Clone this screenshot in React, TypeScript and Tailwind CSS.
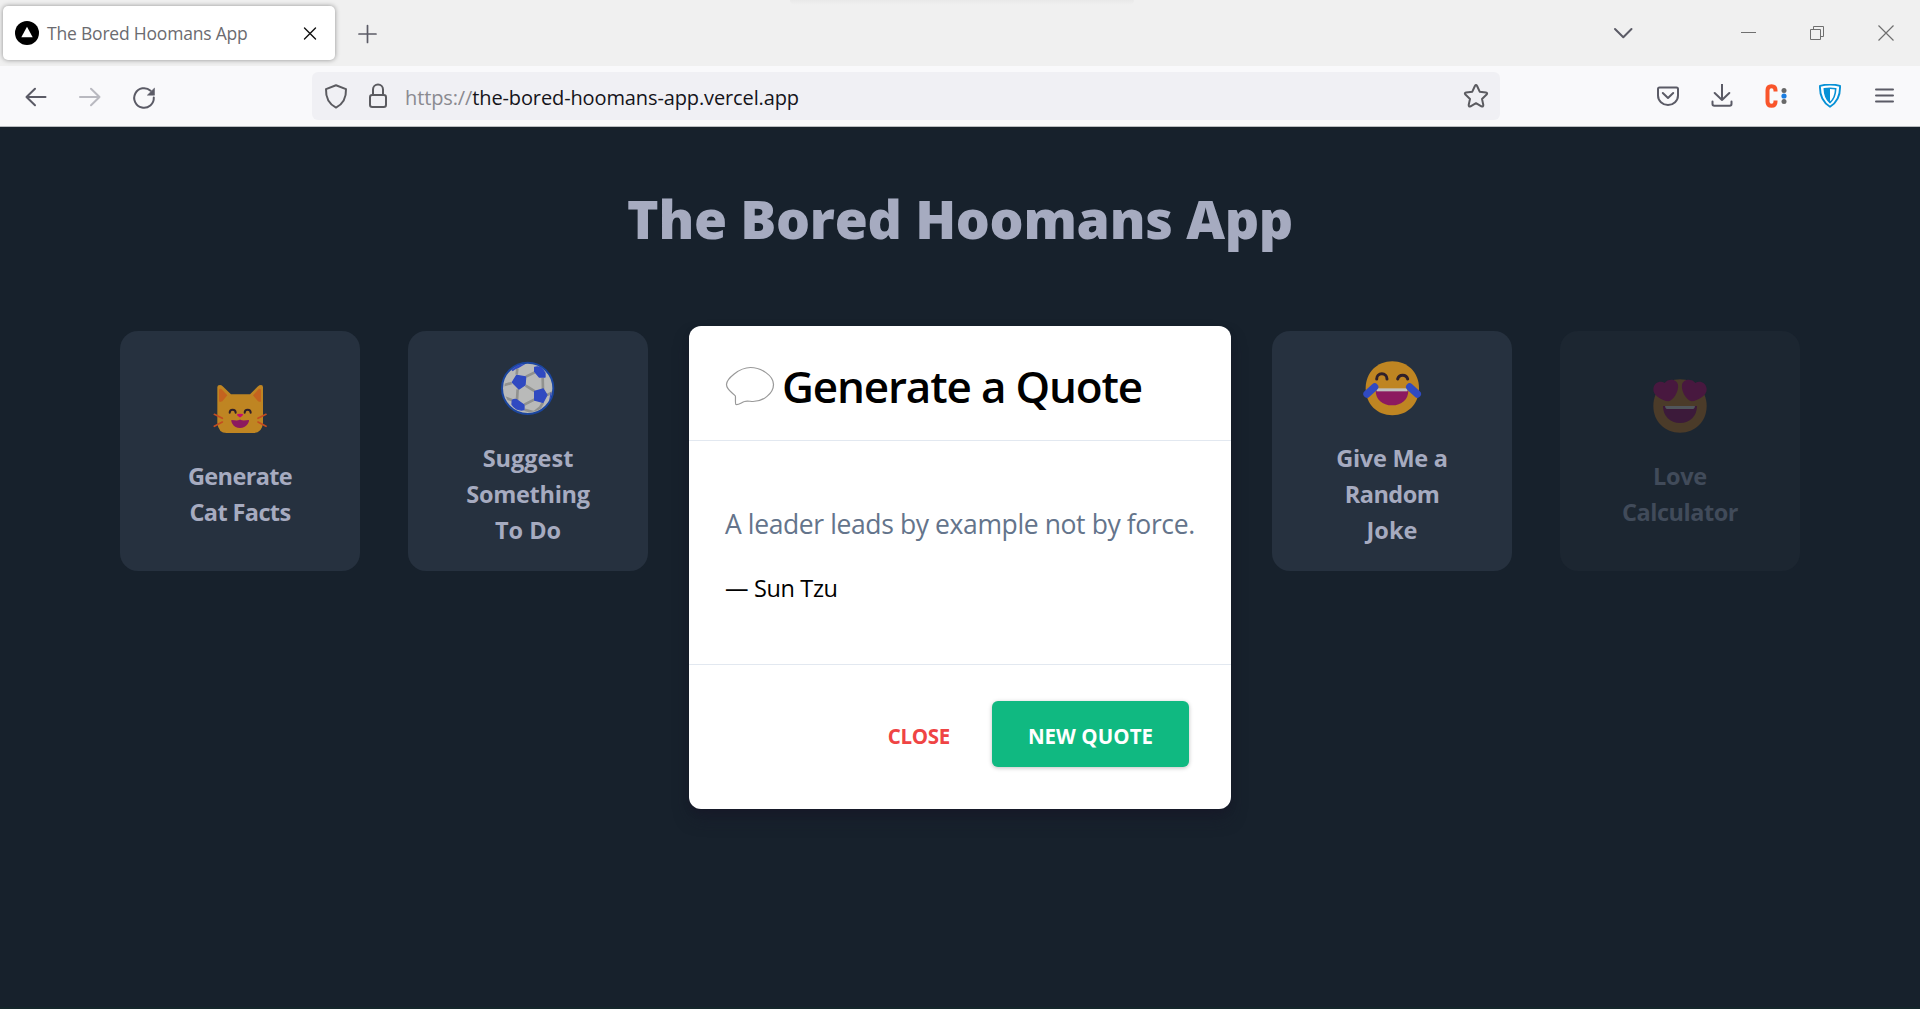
import React from "react";

const stroke = {
  fill: "none",
  stroke: "#5b5b66",
  strokeWidth: 2,
  strokeLinecap: "round" as const,
  strokeLinejoin: "round" as const,
};

function TabStrip() {
  return (
    <div className="relative flex h-[66px] w-full items-start bg-[#f0f0f0]">
      <div className="absolute left-[790px] top-0 h-[5px] w-[344px] rounded-b-full bg-gradient-to-b from-[#e9e9e9] to-[#f0f0f0]" />
      <div className="ml-[3px] mt-[6px] flex h-[54px] w-[332px] items-center rounded-[5px] bg-white shadow-[0_0_5px_rgba(0,0,0,0.4)]">
        <svg width="24" height="24" viewBox="0 0 24 24" className="ml-3 shrink-0">
          <circle cx="12" cy="12" r="12" fill="#000" />
          <path d="M12 5.8 17.7 16.2H6.3Z" fill="#fff" />
        </svg>
        <span className="ml-2 w-[243px] whitespace-nowrap text-[17.5px] leading-[26px] tracking-[-0.2px] text-[#6b6b70]">
          The Bored Hoomans App
        </span>
        <svg width="36" height="36" viewBox="0 0 36 36" className="shrink-0">
          <path d="m14.5 13 11 11m0-11-11 11" {...stroke} stroke="#111" strokeWidth="1.4" />
        </svg>
      </div>
      <svg width="24" height="24" viewBox="0 0 24 24" className="ml-5 mt-[22px]">
        <path d="M12.5 3.5v17M4 12h17" {...stroke} strokeWidth="1.7" />
      </svg>
      <div className="ml-auto flex h-[66px] items-center">
        <svg width="24" height="24" viewBox="0 0 24 24" className="mr-[102px]">
          <path d="m4 8 8.3 8.2L20.500 8" {...stroke} />
        </svg>
        <svg width="24" height="24" viewBox="0 0 24 24" className="mr-11">
          <path d="M4 11.5h15" stroke="#6f6f6f" fill="none" />
        </svg>
        <svg width="24" height="24" viewBox="0 0 24 24" className="mr-[45px]">
          <path d="M5.500 8.500h10v10h-10zM8.500 8.500v-3h10v10h-3" stroke="#6f6f6f" fill="none" />
        </svg>
        <svg width="24" height="24" viewBox="0 0 24 24" className="mr-[22px]">
          <path d="m4.500 4.500 15 15m0-15-15 15" stroke="#6f6f6f" strokeWidth="1.2" fill="none" />
        </svg>
      </div>
    </div>
  );
}

function NavBar() {
  return (
    <div className="flex h-[61px] w-full items-center border-b border-[#b9bcc0] bg-[#f9f9fb]">
      <svg width="30" height="30" viewBox="0 0 30 30" className="ml-[21px]">
        <path d="M24.500 16H5.500m8.500-8.300L5.500 16l8.500 8.300" {...stroke} />
      </svg>
      <svg width="30" height="30" viewBox="0 0 30 30" className="ml-6">
        <path d="M5 16h19.500M16 7.700l8.500 8.300-8.500 8.300" {...stroke} stroke="#b9b9c0" />
      </svg>
      <svg width="30" height="30" viewBox="0 0 30 30" className="ml-6">
        <path d="M24.800 16.500a9.800 9.800 0 1 1-3.200-6.800" {...stroke} />
        <path d="M25.500 7v7.200h-7.200z" fill="#5b5b66" stroke="#5b5b66" strokeWidth=".5" />
      </svg>
      <div className="ml-[153px] flex h-12 w-[1188px] items-center rounded-[6px] bg-[#f0f0f4]">
        <svg width="24" height="26" viewBox="0 0 24 26" className="ml-3">
          <path d="M12 2.200 2 6.100c-.3 7 2.500 14.600 10 18.500 7.500-3.900 10.300-11.500 10-18.500Z" {...stroke} stroke="#5b5b60" />
        </svg>
        <svg width="24" height="26" viewBox="0 0 24 26" className="ml-[18px]">
          <rect x="4" y="12" width="16" height="12" rx="2.200" {...stroke} stroke="#5b5b60" />
          <path d="M7 12V6.500a5 5 0 0 1 10 0V12" {...stroke} stroke="#5b5b60" />
        </svg>
        <span className="ml-[15px] whitespace-nowrap pt-[3px] text-[20px] leading-[28px] tracking-[-0.12px] text-[#8a8a90]">
          https://<span className="text-[#15141a]">the-bored-hoomans-app.vercel.app</span>
        </span>
        <svg width="26" height="26" viewBox="0 0 26 26" className="ml-auto mr-[11px]">
          <path d="M11.900 3q1.100-1.900 2.200 0l2.600 5.700 6.200.7q2.100.5.700 2.200l-4.600 4.300 1.300 6.100q.1 2.100-1.900 1.300L13 20.200l-5.400 3.100q-2 .8-1.900-1.300L7 15.900l-4.600-4.300q-1.400-1.700.7-2.200l6.200-.7Z" {...stroke} stroke="#5b5b60" />
        </svg>
      </div>
      <div className="ml-auto mr-6 flex items-center gap-[30px]">
        <svg width="24" height="24" viewBox="0 0 24 24">
          <path d="M3.500 3.500h17q1.500 0 1.500 1.500v6.500a10 9.500 0 0 1-20 0V5q0-1.500 1.500-1.500Z" {...stroke} />
          <path d="m6.800 9 5.200 5L17.200 9" {...stroke} />
        </svg>
        <svg width="24" height="24" viewBox="0 0 24 24">
          <path d="M12 0v16M4.700 9l7.300 7 7.300-7M2.500 17.500V20q0 1.800 1.800 1.800h15.400q1.800 0 1.800-1.800v-2.500" {...stroke} />
        </svg>
        <svg width="24" height="24" viewBox="0 0 24 24">
          <path d="M11.500 7.500V6.200q0-4-4-4t-4 4v11.600q0 4 4 4t4-4v-1.300" stroke="#f9552b" strokeWidth="4" fill="none" />
          <circle cx="20" cy="6.500" r="2.500" fill="#686868" />
          <circle cx="20" cy="12" r="2.600" fill="#1b7de0" />
          <circle cx="20" cy="17.500" r="2.500" fill="#686868" />
        </svg>
        <svg width="24" height="24" viewBox="0 0 24 24">
          <path d="M2 1.800Q12-.7 22 1.800C22.500 12 18.500 18.800 12 22.800 5.500 18.800 1.500 12 2 1.800Z" fill="#fff" stroke="#0791d6" strokeWidth="1.900" strokeLinejoin="round" />
          <path d="M6.300 4.800q5.700-1 11.400 0C17.500 11 15.800 15.500 12 18.500 8.200 15.500 6.500 11 6.300 4.800Z" fill="#fff" stroke="#0791d6" strokeWidth="1.600" />
          <path d="M6.300 4.800 12 4.400v14C8.200 15.500 6.500 11 6.300 4.800Z" fill="#0791d6" />
        </svg>
        <svg width="24" height="24" viewBox="0 0 24 24">
          <path d="M4 5.500h17M4 11.500h17M4 17.500h17" {...stroke} />
        </svg>
      </div>
    </div>
  );
}

function Cat() {
  return (
    <svg width="60" height="60" viewBox="0 0 180 180">
      <path d="M22 33q0-6 8-6 4 0 8 4l25 24h57l24-24q4-4 9-4 6 0 6 7v107q-3 30-28 30H50q-25 0-28-30Z" fill="#bf8522" />
      <path d="M27 42q1-5 7-3l18 19-15 18-7 2q-3-1-3-4ZM153 42q-1-5-7-3l-17 19 15 18 7 2q2-1 2-4Z" fill="#c4631f" />
      <path d="M59 110a9 9 0 0 1 18 0M104 110a9 9 0 0 1 18 0" fill="none" stroke="#30202a" strokeWidth="6" strokeLinecap="round" />
      <path d="M83 114q8-2 15 0 3 1 0 4l-5 5q-3 2-6 0l-5-5q-2-3 1-4Z" fill="#c20c70" />
      <path d="M64 132q26 3 26-2 1 5 27 2 1 5-4 12-9 12-23 12-15 0-23-13-4-6-3-11Z" fill="#8c195f" />
      <path d="m13 115 24 12m-24 24 24-13m131-23-24 12m24 24-24-13" stroke="#c34c20" strokeWidth="5" strokeLinecap="round" />
    </svg>
  );
}

function Ball() {
  return (
    <svg width="60" height="60" viewBox="0 0 180 180">
      <defs>
        <clipPath id="ball">
          <circle cx="91" cy="91" r="72" />
        </clipPath>
      </defs>
      <circle cx="89" cy="91" r="77" fill="#b9bab9" stroke="#1b469f" strokeWidth="6" />
      <g clipPath="url(#ball)">
        <path
          d="M56 50 58 32M84 56l26-13M83 83l28 17M59 94l-2 32M79 140l31-16M134 59l1 34M41 75 16 82M43 127l-24-9M80 155l28 8M147 111l18-8M135 133l-9 16-18 14"
          fill="none" stroke="#91928f" strokeWidth="8"
        />
      </g>
      <g fill="#304ac1" stroke="#304ac1" strokeWidth="4" strokeLinejoin="round">
        <path d="m56 52 27 5-2 24-18 12-20-20Z" />
        <path d="m110 100 26-7 11 18-12 22-25-7Z" />
        <path d="M110 28q8-3 16 0 9 6 15 17v12h-17l-14-16Z" />
        <path d="M43 127q6-4 13-2l22 16v14q-10 3-22-2-9-6-14-14Z" />
      </g>
      <path d="M40 36q18-20 42-18L62 30q-10 2-18 10Z" fill="#304ac1" />
      <path d="M158 103q3-2 3 4-1 12-8 22Z" fill="#304ac1" />
    </svg>
  );
}

function JoyFace() {
  return (
    <svg width="60" height="60" viewBox="0 0 180 180">
      <path d="M91 10c46 0 80 34 80 81s-34 81-80 81-80-34-80-81 34-81 80-81Z" fill="#bf8522" />
      <path d="M44 63a15.500 15.500 0 0 1 31 0M107 63a15.500 15.500 0 0 1 30 0" stroke="#30202a" strokeWidth="9" strokeLinecap="round" fill="none" />
      <path d="M41 98h98c0 26-20 44-49 44s-49-18-49-44Z" fill="#8c195f" />
      <path d="M44 91h92v9H44z" fill="#bfc0be" />
      <path d="m38 87-23 21m128-21 23 21" stroke="#304ac1" strokeWidth="22" strokeLinecap="round" />
    </svg>
  );
}

function LoveFace() {
  return (
    <svg width="60" height="60" viewBox="0 0 180 180">
      <path d="M90 10c46 0 80 34 80 80s-34 80-80 80-80-34-80-80 34-80 80-80Z" fill="#4b3b29" />
      <path d="M39 90h102c0 30-21 51-51 51S39 120 39 90Z" fill="#3c1a3a" />
      <path d="M45 90h90q-1 9-5 9H50q-4 0-5-9Z" fill="#51565b" />
      <path d="M56 76C36 74 8 58 10 38c2-19 22-26 34-17C53 7 80 7 84 26c3 20-13 45-28 50Z" fill="#48183f" />
      <path d="M124 76c20-2 48-18 46-38-2-19-22-26-34-17-9-14-36-14-40 5-3 20 13 45 28 50Z" fill="#48183f" />
    </svg>
  );
}

function Card({ icon, lines, dim }: { icon?: React.ReactNode; lines: { text: string; cls: string }[]; dim?: boolean }) {
  return (
    <div
      className={
        "flex h-60 w-60 flex-col items-center justify-center rounded-[18px] " +
        (dim ? "bg-[#1c2631] text-[#414b5a]" : "bg-[#26313f] text-[#a6abc0]")
      }
    >
      <div className="h-[85px] pt-[3px]">{icon}</div>
      {lines.map((l) => (
        <div key={l.text} className={"whitespace-nowrap text-[23.5px] font-bold leading-9 " + l.cls}>
          {l.text}
        </div>
      ))}
    </div>
  );
}

function QuoteDialog() {
  return (
    <div className="absolute left-[689px] top-[326px] flex h-[483px] w-[542px] flex-col rounded-[12px] bg-white shadow-[0_11px_17px_-3px_rgba(23,24,40,0.7),0_4px_7px_-2px_rgba(23,20,40,0.5)]">
      <div className="flex h-[115px] items-center border-b border-[#e2e8f0] pl-9 pt-[5px]">
        <svg width="52" height="48" viewBox="0 0 52 48" className="shrink-0">
          <path
            d="M25.500 5.500C36 5.500 48.500 13.500 48.500 22.500S38 39.500 28 39.500c-3 0-6-1-8.500 0-3 1-6 3.500-8.500 3-1-.5-.3-6-.6-8.500C8 31 1.500 28 1.500 22.500S14 5.500 25.500 5.500Z"
            fill="#fff" stroke="#999" strokeWidth="1.200"
          />
        </svg>
        <h2 className="ml-[5px] whitespace-nowrap text-[44px] font-semibold leading-[60px] tracking-[-1.15px] text-black">
          Generate a Quote
        </h2>
      </div>
      <div className="flex h-[224px] flex-col border-b border-[#e2e8f0] pl-9 pt-[63px]">
        <p className="whitespace-nowrap text-[26.500px] leading-10 tracking-[-0.39px] text-[#64748b]">A leader leads by example not by force.</p>
        <p className="mt-6 whitespace-nowrap text-[23.500px] leading-10 tracking-[-0.35px] text-black">— Sun Tzu</p>
      </div>
      <div className="flex items-center justify-end pr-[42px] pt-9">
        <button className="mr-[42px] whitespace-nowrap pt-[3px] text-[20.500px] font-bold leading-[30px] tracking-[-0.3px] text-[#ef4444]">CLOSE</button>
        <button className="h-[66px] w-[197px] whitespace-nowrap rounded-[6px] bg-[#10b981] pt-[3px] text-[20.500px] font-bold leading-[30px] tracking-[0.05px] text-white shadow-[0_1px_4px_rgba(0,0,0,0.25)]">
          NEW QUOTE
        </button>
      </div>
    </div>
  );
}

export default function App() {
  return (
    <div className="relative h-[1009px] w-[1920px] overflow-hidden bg-[#17212c] font-['Open_Sans',sans-serif]">
      <TabStrip />
      <NavBar />
      <main>
        <h1 className="mt-[59px] whitespace-nowrap text-center text-[53.500px] font-extrabold leading-[66px] tracking-[-0.3px] text-[#a6abc0]">
          The Bored Hoomans App
        </h1>
        <div className="mx-[120px] mt-[79px] flex justify-between">
          <Card
            icon={<Cat />}
            lines={[
              { text: "Generate", cls: "tracking-[-0.65px]" },
              { text: "Cat Facts", cls: "tracking-[-0.6px]" },
            ]}
          />
          <Card
            icon={<Ball />}
            lines={[
              { text: "Suggest", cls: "" },
              { text: "Something", cls: "tracking-[-0.3px]" },
              { text: "To Do", cls: "" },
            ]}
          />
          <Card lines={[]} />
          <Card lines={[]} />
          <Card
            icon={<JoyFace />}
            lines={[
              { text: "Give Me a", cls: "tracking-[-0.25px]" },
              { text: "Random", cls: "tracking-[-0.5px]" },
              { text: "Joke", cls: "" },
            ]}
          />
          <Card
            dim
            icon={<LoveFace />}
            lines={[
              { text: "Love", cls: "tracking-[-0.3px]" },
              { text: "Calculator", cls: "tracking-[-0.45px]" },
            ]}
          />
        </div>
      </main>
      <div className="absolute bottom-0 left-0 h-0.5 w-full bg-[#15262b]" />
      <QuoteDialog />
    </div>
  );
}
